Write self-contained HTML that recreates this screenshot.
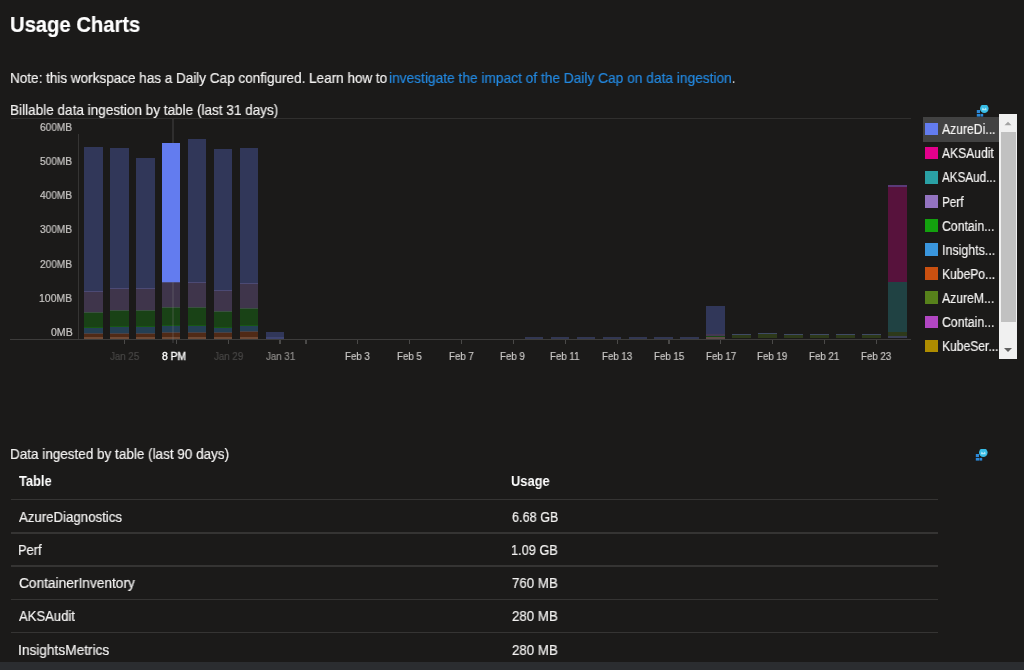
<!DOCTYPE html>
<html><head><meta charset="utf-8"><style>
html,body{margin:0;padding:0;width:1024px;height:670px;overflow:hidden;background:#1b1a19;font-family:"Liberation Sans",sans-serif;color:#f3f2f1}
body>div,#bars>div{position:absolute}
.t{position:absolute;line-height:0;white-space:nowrap;will-change:transform;transform-origin:0 0;-webkit-text-stroke:0.2px currentColor}
.tk{position:absolute;top:339.5px;width:1.2px;height:4.3px;background:#4a4948}
.sw{position:absolute;left:925px;width:13px;height:12.8px}
.hr{position:absolute;left:11px;width:927px;height:1.3px;background:#353433}
</style></head><body>
<div style="left:11px;top:118px;width:900px;height:1px;background:#302f2e"></div>
<svg style="position:absolute;left:976px;top:105px" width="16" height="16" viewBox="0 0 16 16">
<rect x="0.8" y="5" width="3.2" height="3" fill="#2b88d8"/><rect x="0.8" y="8.9" width="3.2" height="2.7" fill="#2b88d8"/><rect x="4.4" y="8.9" width="2.8" height="2.7" fill="#2b88d8"/>
<circle cx="8.3" cy="3.6" r="4.3" fill="#38bde6"/><path d="M5.9 5.2 L6.6 2.6 L8.3 4.3 L10 2.6 L10.7 5.2 Z" fill="#c6eef9" opacity="0.85"/></svg>
<div style="left:78px;top:134px;width:1px;height:205px;background:#353433"></div>
<div id="bars">
<div style="left:84.0px;top:146.5px;width:18.7px;height:144.5px;background:#313759"></div>
<div style="left:84.0px;top:291.0px;width:18.7px;height:21.5px;background:#3f354b"></div>
<div style="left:84.0px;top:290.5px;width:18.7px;height:1.0px;background:#4c4a74"></div>
<div style="left:84.0px;top:312.0px;width:18.7px;height:1.0px;background:#3a5040"></div>
<div style="left:84.0px;top:312.5px;width:18.7px;height:14.5px;background:#194216"></div>
<div style="left:84.0px;top:327.0px;width:18.7px;height:6.0px;background:#243f54"></div>
<div style="left:84.0px;top:326.5px;width:18.7px;height:1.0px;background:#175714"></div>
<div style="left:84.0px;top:333.0px;width:18.7px;height:3.5px;background:#502a16"></div>
<div style="left:84.0px;top:332.5px;width:18.7px;height:1.0px;background:#4a4347"></div>
<div style="left:84.0px;top:336.5px;width:18.7px;height:2.0px;background:#6e4a36"></div>
<div style="left:109.93px;top:148.0px;width:18.7px;height:140.5px;background:#313759"></div>
<div style="left:109.93px;top:288.5px;width:18.7px;height:22.2px;background:#3f354b"></div>
<div style="left:109.93px;top:288.0px;width:18.7px;height:1.0px;background:#4c4a74"></div>
<div style="left:109.93px;top:310.2px;width:18.7px;height:1.0px;background:#3a5040"></div>
<div style="left:109.93px;top:310.7px;width:18.7px;height:15.3px;background:#194216"></div>
<div style="left:109.93px;top:326.0px;width:18.7px;height:7.0px;background:#243f54"></div>
<div style="left:109.93px;top:325.5px;width:18.7px;height:1.0px;background:#175714"></div>
<div style="left:109.93px;top:333.0px;width:18.7px;height:3.5px;background:#502a16"></div>
<div style="left:109.93px;top:332.5px;width:18.7px;height:1.0px;background:#4a4347"></div>
<div style="left:109.93px;top:336.5px;width:18.7px;height:2.0px;background:#6e4a36"></div>
<div style="left:135.86px;top:158.3px;width:18.7px;height:130.2px;background:#313759"></div>
<div style="left:135.86px;top:288.5px;width:18.7px;height:22.2px;background:#3f354b"></div>
<div style="left:135.86px;top:288.0px;width:18.7px;height:1.0px;background:#4c4a74"></div>
<div style="left:135.86px;top:310.2px;width:18.7px;height:1.0px;background:#3a5040"></div>
<div style="left:135.86px;top:310.7px;width:18.7px;height:15.3px;background:#194216"></div>
<div style="left:135.86px;top:326.0px;width:18.7px;height:7.0px;background:#243f54"></div>
<div style="left:135.86px;top:325.5px;width:18.7px;height:1.0px;background:#175714"></div>
<div style="left:135.86px;top:333.0px;width:18.7px;height:3.5px;background:#502a16"></div>
<div style="left:135.86px;top:332.5px;width:18.7px;height:1.0px;background:#4a4347"></div>
<div style="left:135.86px;top:336.5px;width:18.7px;height:2.0px;background:#6e4a36"></div>
<div style="left:161.79px;top:282.0px;width:18.7px;height:25.5px;background:#3f354b"></div>
<div style="left:161.79px;top:281.5px;width:18.7px;height:1.0px;background:#4c4a74"></div>
<div style="left:161.79px;top:307.0px;width:18.7px;height:1.0px;background:#3a5040"></div>
<div style="left:161.79px;top:307.5px;width:18.7px;height:17.5px;background:#194216"></div>
<div style="left:161.79px;top:325.0px;width:18.7px;height:7.0px;background:#243f54"></div>
<div style="left:161.79px;top:324.5px;width:18.7px;height:1.0px;background:#175714"></div>
<div style="left:161.79px;top:332.0px;width:18.7px;height:4.5px;background:#502a16"></div>
<div style="left:161.79px;top:331.5px;width:18.7px;height:1.0px;background:#4a4347"></div>
<div style="left:161.79px;top:336.5px;width:18.7px;height:2.0px;background:#6e4a36"></div>
<div style="left:187.72px;top:139.2px;width:18.7px;height:143.3px;background:#313759"></div>
<div style="left:187.72px;top:282.5px;width:18.7px;height:25.0px;background:#3f354b"></div>
<div style="left:187.72px;top:282.0px;width:18.7px;height:1.0px;background:#4c4a74"></div>
<div style="left:187.72px;top:307.0px;width:18.7px;height:1.0px;background:#3a5040"></div>
<div style="left:187.72px;top:307.5px;width:18.7px;height:17.7px;background:#194216"></div>
<div style="left:187.72px;top:325.2px;width:18.7px;height:6.8px;background:#243f54"></div>
<div style="left:187.72px;top:324.7px;width:18.7px;height:1.0px;background:#175714"></div>
<div style="left:187.72px;top:332.0px;width:18.7px;height:4.5px;background:#502a16"></div>
<div style="left:187.72px;top:331.5px;width:18.7px;height:1.0px;background:#4a4347"></div>
<div style="left:187.72px;top:336.5px;width:18.7px;height:2.0px;background:#6e4a36"></div>
<div style="left:213.65px;top:148.5px;width:18.7px;height:142.0px;background:#313759"></div>
<div style="left:213.65px;top:290.5px;width:18.7px;height:21.1px;background:#3f354b"></div>
<div style="left:213.65px;top:290.0px;width:18.7px;height:1.0px;background:#4c4a74"></div>
<div style="left:213.65px;top:311.1px;width:18.7px;height:1.0px;background:#3a5040"></div>
<div style="left:213.65px;top:311.6px;width:18.7px;height:15.7px;background:#194216"></div>
<div style="left:213.65px;top:327.3px;width:18.7px;height:5.2px;background:#243f54"></div>
<div style="left:213.65px;top:326.8px;width:18.7px;height:1.0px;background:#175714"></div>
<div style="left:213.65px;top:332.5px;width:18.7px;height:4.0px;background:#502a16"></div>
<div style="left:213.65px;top:332.0px;width:18.7px;height:1.0px;background:#4a4347"></div>
<div style="left:213.65px;top:336.5px;width:18.7px;height:2.0px;background:#6e4a36"></div>
<div style="left:239.58px;top:148.0px;width:18.7px;height:135.0px;background:#313759"></div>
<div style="left:239.58px;top:283.0px;width:18.7px;height:25.6px;background:#3f354b"></div>
<div style="left:239.58px;top:282.5px;width:18.7px;height:1.0px;background:#4c4a74"></div>
<div style="left:239.58px;top:308.1px;width:18.7px;height:1.0px;background:#3a5040"></div>
<div style="left:239.58px;top:308.6px;width:18.7px;height:16.8px;background:#194216"></div>
<div style="left:239.58px;top:325.4px;width:18.7px;height:6.1px;background:#243f54"></div>
<div style="left:239.58px;top:324.9px;width:18.7px;height:1.0px;background:#175714"></div>
<div style="left:239.58px;top:331.5px;width:18.7px;height:5.0px;background:#502a16"></div>
<div style="left:239.58px;top:331.0px;width:18.7px;height:1.0px;background:#4a4347"></div>
<div style="left:239.58px;top:336.5px;width:18.7px;height:2.0px;background:#6e4a36"></div>
<div style="left:265.51px;top:332.0px;width:18.7px;height:5.5px;background:#313759"></div>
<div style="left:265.51px;top:337.3px;width:18.7px;height:1.3px;background:#3e4470"></div>
<div style="left:524.81px;top:337.3px;width:18.7px;height:1.3px;background:#323752"></div>
<div style="left:550.74px;top:337.3px;width:18.7px;height:1.3px;background:#323752"></div>
<div style="left:576.67px;top:337.3px;width:18.7px;height:1.3px;background:#323752"></div>
<div style="left:602.6px;top:337.3px;width:18.7px;height:1.3px;background:#323752"></div>
<div style="left:628.53px;top:337.3px;width:18.7px;height:1.3px;background:#323752"></div>
<div style="left:654.46px;top:337.3px;width:18.7px;height:1.3px;background:#323752"></div>
<div style="left:680.39px;top:337.3px;width:18.7px;height:1.3px;background:#323752"></div>
<div style="left:706.32px;top:306.0px;width:18.7px;height:28.0px;background:#313759"></div>
<div style="left:706.32px;top:334.0px;width:18.7px;height:1.5px;background:#453953"></div>
<div style="left:706.32px;top:335.5px;width:18.7px;height:1.0px;background:#184915"></div>
<div style="left:706.32px;top:336.5px;width:18.7px;height:2.0px;background:#5e4a48"></div>
<div style="left:732.25px;top:333.7px;width:18.7px;height:1.2px;background:#3f4a64"></div>
<div style="left:732.25px;top:334.9px;width:18.7px;height:3.6px;background:#2d391a"></div>
<div style="left:758.18px;top:333.1px;width:18.7px;height:1.2px;background:#3f4a64"></div>
<div style="left:758.18px;top:334.3px;width:18.7px;height:4.2px;background:#2d391a"></div>
<div style="left:784.11px;top:334.0px;width:18.7px;height:1.2px;background:#3f4a64"></div>
<div style="left:784.11px;top:335.2px;width:18.7px;height:3.3px;background:#2d391a"></div>
<div style="left:810.04px;top:334.0px;width:18.7px;height:1.2px;background:#3f4a64"></div>
<div style="left:810.04px;top:335.2px;width:18.7px;height:3.3px;background:#2d391a"></div>
<div style="left:835.97px;top:334.0px;width:18.7px;height:1.2px;background:#3f4a64"></div>
<div style="left:835.97px;top:335.2px;width:18.7px;height:3.3px;background:#2d391a"></div>
<div style="left:861.9px;top:334.2px;width:18.7px;height:1.2px;background:#3f4a64"></div>
<div style="left:861.9px;top:335.4px;width:18.7px;height:3.1px;background:#2d391a"></div>
<div style="left:887.83px;top:185.0px;width:18.7px;height:1.5px;background:#5a3a78"></div>
<div style="left:887.83px;top:186.5px;width:18.7px;height:95.7px;background:#57123c"></div>
<div style="left:887.83px;top:282.2px;width:18.7px;height:50.2px;background:#204243"></div>
<div style="left:887.83px;top:332.4px;width:18.7px;height:3.3px;background:#2d391a"></div>
<div style="left:887.83px;top:335.7px;width:18.7px;height:0.6px;background:#55585c"></div>
<div style="left:887.83px;top:336.3px;width:18.7px;height:2.2px;background:#3a3f55"></div>
</div>
<div style="left:10px;top:338.6px;width:901px;height:1.3px;background:#3d3c3b"></div>
<div style="left:172.3px;top:119px;width:1.8px;height:224px;background:rgba(130,130,130,0.2)"></div>
<div style="left:161.79px;top:143.0px;width:18.7px;height:139.0px;background:#637cef"></div>
<div class="tk" style="left:123.83px"></div>
<div class="tk" style="left:175.69px"></div>
<div class="tk" style="left:227.55px"></div>
<div class="tk" style="left:279.41px"></div>
<div class="tk" style="left:305.34px"></div>
<div class="tk" style="left:357.20px"></div>
<div class="tk" style="left:409.06px"></div>
<div class="tk" style="left:460.92px"></div>
<div class="tk" style="left:512.78px"></div>
<div class="tk" style="left:564.64px"></div>
<div class="tk" style="left:616.50px"></div>
<div class="tk" style="left:668.36px"></div>
<div class="tk" style="left:720.22px"></div>
<div class="tk" style="left:772.08px"></div>
<div class="tk" style="left:823.94px"></div>
<div class="tk" style="left:875.80px"></div>
<div style="left:923px;top:117px;width:76px;height:24.5px;background:#424242"></div>
<div class="sw" style="top:122.6px;background:#637cef"></div>
<div class="sw" style="top:146.7px;background:#e3008c"></div>
<div class="sw" style="top:170.8px;background:#2aa0a4"></div>
<div class="sw" style="top:194.9px;background:#9373c0"></div>
<div class="sw" style="top:219.0px;background:#13a10e"></div>
<div class="sw" style="top:243.1px;background:#3a96dd"></div>
<div class="sw" style="top:267.3px;background:#ca5010"></div>
<div class="sw" style="top:291.4px;background:#57811b"></div>
<div class="sw" style="top:315.5px;background:#b146c2"></div>
<div class="sw" style="top:339.6px;background:#ae8c00"></div>
<div style="left:999px;top:114px;width:18px;height:245px;background:#f0f0f0"></div>
<div style="left:1001px;top:132px;width:14.5px;height:190px;background:#c1c1c1"></div>
<svg style="position:absolute;left:1003px;top:119px" width="10" height="8"><path d="M1.5 6.3 L5 2.8 L8.5 6.3 Z" fill="#a3a3a3"/></svg>
<svg style="position:absolute;left:1003px;top:346px" width="10" height="8"><path d="M1 2 L5 6 L9 2 Z" fill="#606060"/></svg>
<svg style="position:absolute;left:975px;top:449px" width="16" height="16" viewBox="0 0 16 16">
<rect x="0.8" y="5" width="3.2" height="3" fill="#2b88d8"/><rect x="0.8" y="8.9" width="3.2" height="2.7" fill="#2b88d8"/><rect x="4.4" y="8.9" width="2.8" height="2.7" fill="#2b88d8"/>
<circle cx="8.3" cy="3.6" r="4.3" fill="#38bde6"/><path d="M5.9 5.2 L6.6 2.6 L8.3 4.3 L10 2.6 L10.7 5.2 Z" fill="#c6eef9" opacity="0.85"/></svg>
<div class="hr" style="top:498.95px"></div>
<div class="hr" style="top:532.30px"></div>
<div class="hr" style="top:565.25px"></div>
<div class="hr" style="top:598.65px"></div>
<div class="hr" style="top:631.85px"></div>
<div class="t" style="left:9.98px;top:25.28px;font-size:22px;font-weight:bold;color:#ffffff;transform:scaleX(0.9186)">Usage Charts</div>
<div class="t" style="left:10.07px;top:77.98px;font-size:14.5px;font-weight:normal;color:#f3f2f1;transform:scaleX(0.9323)">Note: this workspace has a Daily Cap configured. Learn how to</div>
<div class="t" style="left:389.45px;top:77.98px;font-size:14.5px;font-weight:normal;color:#2388df;transform:scaleX(0.9472)">investigate the impact of the Daily Cap on data ingestion</div>
<div class="t" style="left:731.80px;top:77.98px;font-size:14.5px;font-weight:normal;color:#f3f2f1;transform:scaleX(0.8000)">.</div>
<div class="t" style="left:10.06px;top:109.58px;font-size:14.5px;font-weight:normal;color:#f3f2f1;transform:scaleX(0.9351)">Billable data ingestion by table (last 31 days)</div>
<div class="t" style="left:40.00px;top:127.16px;font-size:10.5px;font-weight:normal;color:#c8c6c4;transform:scaleX(0.9636)">600MB</div>
<div class="t" style="left:40.00px;top:161.26px;font-size:10.5px;font-weight:normal;color:#c8c6c4;transform:scaleX(0.9636)">500MB</div>
<div class="t" style="left:40.00px;top:195.36px;font-size:10.5px;font-weight:normal;color:#c8c6c4;transform:scaleX(0.9636)">400MB</div>
<div class="t" style="left:40.00px;top:229.46px;font-size:10.5px;font-weight:normal;color:#c8c6c4;transform:scaleX(0.9636)">300MB</div>
<div class="t" style="left:40.00px;top:263.56px;font-size:10.5px;font-weight:normal;color:#c8c6c4;transform:scaleX(0.9636)">200MB</div>
<div class="t" style="left:39.01px;top:297.66px;font-size:10.5px;font-weight:normal;color:#c8c6c4;transform:scaleX(0.9938)">100MB</div>
<div class="t" style="left:50.70px;top:331.76px;font-size:10.5px;font-weight:normal;color:#c8c6c4;transform:scaleX(1.0048)">0MB</div>
<div class="t" style="left:110.08px;top:356.46px;font-size:10.5px;font-weight:normal;color:#484746;transform:scaleX(0.9258)">Jan 25</div>
<div class="t" style="left:213.80px;top:356.46px;font-size:10.5px;font-weight:normal;color:#484746;transform:scaleX(0.9258)">Jan 29</div>
<div class="t" style="left:265.66px;top:356.46px;font-size:10.5px;font-weight:normal;color:#8f8d8b;transform:scaleX(0.9258)">Jan 31</div>
<div class="t" style="left:344.84px;top:356.46px;font-size:10.5px;font-weight:normal;color:#c8c6c4;transform:scaleX(0.9258)">Feb 3</div>
<div class="t" style="left:396.70px;top:356.46px;font-size:10.5px;font-weight:normal;color:#c8c6c4;transform:scaleX(0.9258)">Feb 5</div>
<div class="t" style="left:448.56px;top:356.46px;font-size:10.5px;font-weight:normal;color:#c8c6c4;transform:scaleX(0.9258)">Feb 7</div>
<div class="t" style="left:500.42px;top:356.46px;font-size:10.5px;font-weight:normal;color:#c8c6c4;transform:scaleX(0.9258)">Feb 9</div>
<div class="t" style="left:549.96px;top:356.46px;font-size:10.5px;font-weight:normal;color:#c8c6c4;transform:scaleX(0.9258)">Feb 11</div>
<div class="t" style="left:601.82px;top:356.46px;font-size:10.5px;font-weight:normal;color:#c8c6c4;transform:scaleX(0.9258)">Feb 13</div>
<div class="t" style="left:653.68px;top:356.46px;font-size:10.5px;font-weight:normal;color:#c8c6c4;transform:scaleX(0.9258)">Feb 15</div>
<div class="t" style="left:705.54px;top:356.46px;font-size:10.5px;font-weight:normal;color:#c8c6c4;transform:scaleX(0.9258)">Feb 17</div>
<div class="t" style="left:757.40px;top:356.46px;font-size:10.5px;font-weight:normal;color:#c8c6c4;transform:scaleX(0.9258)">Feb 19</div>
<div class="t" style="left:809.26px;top:356.46px;font-size:10.5px;font-weight:normal;color:#c8c6c4;transform:scaleX(0.9258)">Feb 21</div>
<div class="t" style="left:861.12px;top:356.46px;font-size:10.5px;font-weight:normal;color:#c8c6c4;transform:scaleX(0.9258)">Feb 23</div>
<div class="t" style="left:161.55px;top:356.46px;font-size:10.5px;font-weight:normal;-webkit-text-stroke:0.32px #fff;color:#ffffff;transform:scaleX(0.9792)">8 PM</div>
<div class="t" style="left:942.40px;top:129.25px;font-size:14px;font-weight:normal;color:#f3f2f1;transform:scaleX(0.8700)">AzureDi...</div>
<div class="t" style="left:942.40px;top:153.36px;font-size:14px;font-weight:normal;color:#f3f2f1;transform:scaleX(0.8633)">AKSAudit</div>
<div class="t" style="left:942.40px;top:177.47px;font-size:14px;font-weight:normal;color:#f3f2f1;transform:scaleX(0.8328)">AKSAud...</div>
<div class="t" style="left:941.56px;top:201.58px;font-size:14px;font-weight:normal;color:#f3f2f1;transform:scaleX(0.8400)">Perf</div>
<div class="t" style="left:942.40px;top:225.69px;font-size:14px;font-weight:normal;color:#f3f2f1;transform:scaleX(0.8746)">Contain...</div>
<div class="t" style="left:941.51px;top:249.80px;font-size:14px;font-weight:normal;color:#f3f2f1;transform:scaleX(0.8879)">Insights...</div>
<div class="t" style="left:941.54px;top:273.91px;font-size:14px;font-weight:normal;color:#f3f2f1;transform:scaleX(0.8644)">KubePo...</div>
<div class="t" style="left:942.40px;top:298.02px;font-size:14px;font-weight:normal;color:#f3f2f1;transform:scaleX(0.8729)">AzureM...</div>
<div class="t" style="left:942.40px;top:322.13px;font-size:14px;font-weight:normal;color:#f3f2f1;transform:scaleX(0.8746)">Contain...</div>
<div class="t" style="left:941.54px;top:346.24px;font-size:14px;font-weight:normal;color:#f3f2f1;transform:scaleX(0.8635)">KubeSer...</div>
<div class="t" style="left:9.77px;top:454.18px;font-size:14.5px;font-weight:normal;color:#f3f2f1;transform:scaleX(0.9308)">Data ingested by table (last 90 days)</div>
<div class="t" style="left:18.90px;top:480.95px;font-size:14px;font-weight:bold;-webkit-text-stroke:0;color:#ffffff;transform:scaleX(0.9200)">Table</div>
<div class="t" style="left:511.28px;top:480.85px;font-size:14px;font-weight:bold;-webkit-text-stroke:0;color:#ffffff;transform:scaleX(0.9195)">Usage</div>
<div class="t" style="left:19.10px;top:516.95px;font-size:14px;font-weight:normal;color:#f3f2f1;transform:scaleX(0.9450)">AzureDiagnostics</div>
<div class="t" style="left:512.30px;top:516.95px;font-size:14px;font-weight:normal;color:#f3f2f1;transform:scaleX(0.9020)">6.68 GB</div>
<div class="t" style="left:18.18px;top:550.10px;font-size:14px;font-weight:normal;color:#f3f2f1;transform:scaleX(0.9200)">Perf</div>
<div class="t" style="left:511.39px;top:550.10px;font-size:14px;font-weight:normal;color:#f3f2f1;transform:scaleX(0.9100)">1.09 GB</div>
<div class="t" style="left:19.10px;top:583.25px;font-size:14px;font-weight:normal;color:#f3f2f1;transform:scaleX(0.9788)">ContainerInventory</div>
<div class="t" style="left:512.30px;top:583.25px;font-size:14px;font-weight:normal;color:#f3f2f1;transform:scaleX(0.9479)">760 MB</div>
<div class="t" style="left:19.10px;top:616.40px;font-size:14px;font-weight:normal;color:#f3f2f1;transform:scaleX(0.9333)">AKSAudit</div>
<div class="t" style="left:512.30px;top:616.40px;font-size:14px;font-weight:normal;color:#f3f2f1;transform:scaleX(0.9479)">280 MB</div>
<div class="t" style="left:18.12px;top:649.55px;font-size:14px;font-weight:normal;color:#f3f2f1;transform:scaleX(0.9783)">InsightsMetrics</div>
<div class="t" style="left:512.30px;top:649.55px;font-size:14px;font-weight:normal;color:#f3f2f1;transform:scaleX(0.9479)">280 MB</div>
<div style="left:0;top:662px;width:1024px;height:8px;background:#2b2d30"></div>
<div class="t" style="left:934px;top:673.5px;font-size:11px;font-weight:bold;color:#fff">5:15 PM</div>
</body></html>
